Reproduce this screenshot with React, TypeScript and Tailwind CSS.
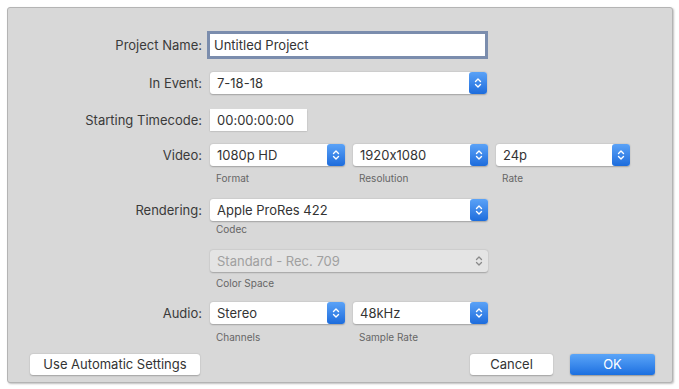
import React from "react";

const font = { fontFamily: "Inter, 'Liberation Sans', sans-serif", fontFeatureSettings: "'calt' 0" };

function Stepper({ disabled = false }: { disabled?: boolean }) {
  if (disabled) {
    return (
      <div className="flex h-full w-[18px] items-center justify-center">
        <svg width="8" height="12" viewBox="0 0 8 12" fill="none" stroke="#8a8a8a" strokeWidth="1.3" strokeLinecap="round" strokeLinejoin="round">
          <path d="M1.5 4.5 L4 2 L6.5 4.5" />
          <path d="M1.5 7.5 L4 10 L6.5 7.5" />
        </svg>
      </div>
    );
  }
  return (
    <div className="flex h-full w-[18px] items-center justify-center rounded-[3px] bg-gradient-to-b from-[#5aa2f7] to-[#1c6cdc]">
      <svg width="8" height="12" viewBox="0 0 8 12" fill="none" stroke="#ffffff" strokeWidth="1.4" strokeLinecap="round" strokeLinejoin="round">
        <path d="M1.5 4.5 L4 2 L6.5 4.5" />
        <path d="M1.5 7.5 L4 10 L6.5 7.5" />
      </svg>
    </div>
  );
}

function Select({ value, width, disabled = false }: { value: string; width: string; disabled?: boolean }) {
  return (
    <div
      className={`flex h-[22px] ${width} items-center justify-between rounded-[3px] ${
        disabled ? "bg-[#e4e4e4] text-[#a0a0a0]" : "bg-white text-[#333333]"
      } shadow-[0_0.5px_1.5px_rgba(0,0,0,0.25)]`}
    >
      <span className="pl-[7px] text-[13px] leading-none">{value}</span>
      <Stepper disabled={disabled} />
    </div>
  );
}

function Label({ children }: { children: React.ReactNode }) {
  return <div className="w-[195px] pr-[1px] text-right text-[13px] leading-none text-[#3a3a3a]">{children}</div>;
}

function Sub({ children, width }: { children: React.ReactNode; width: string }) {
  return <div className={`${width} pl-[6px] text-[10px] leading-[12px] text-[#666666]`}>{children}</div>;
}

export default function App() {
  return (
    <div className="h-[389px] w-[679px] bg-white p-[7px]" style={font}>
      <div className="flex h-[376px] w-[666px] flex-col rounded-[3px] border border-[#b4b4b4] bg-[#d8d8d8] shadow-[1px_1px_2px_rgba(0,0,0,0.25)]">
        {/* Project Name */}
        <div className="mt-[26px] flex items-center gap-[7px]">
          <Label>Project Name:</Label>
          <div className="flex h-[22px] w-[275px] items-center bg-white outline outline-[3px] outline-[#7b8dad]">
            <span className="pl-[4px] text-[13px] leading-none text-[#333333]">Untitled Project</span>
          </div>
        </div>
        {/* In Event */}
        <div className="mt-[16px] flex items-center gap-[7px]">
          <Label>In Event:</Label>
          <Select value="7-18-18" width="w-[277px]" />
        </div>
        {/* Timecode */}
        <div className="mt-[15px] flex items-center gap-[7px]">
          <Label>Starting Timecode:</Label>
          <div className="flex h-[22px] w-[97px] items-center bg-white shadow-[0_0.5px_1.5px_rgba(0,0,0,0.25)]">
            <span className="pl-[7px] text-[13px] leading-none text-[#333333]">00:00:00:00</span>
          </div>
        </div>
        {/* Video */}
        <div className="mt-[13px] flex items-center gap-[7px]">
          <Label>Video:</Label>
          <div className="flex gap-[8px]">
            <Select value="1080p HD" width="w-[135px]" />
            <Select value="1920x1080" width="w-[135px]" />
            <Select value="24p" width="w-[134px]" />
          </div>
        </div>
        <div className="mt-[6px] flex gap-[7px]">
          <div className="w-[195px]" />
          <div className="flex gap-[8px]">
            <Sub width="w-[135px]">Format</Sub>
            <Sub width="w-[135px]">Resolution</Sub>
            <Sub width="w-[134px]">Rate</Sub>
          </div>
        </div>
        {/* Rendering */}
        <div className="mt-[15px] flex items-center gap-[7px]">
          <Label>Rendering:</Label>
          <Select value="Apple ProRes 422" width="w-[278px]" />
        </div>
        <div className="mt-[2px] flex gap-[7px]">
          <div className="w-[195px]" />
          <Sub width="w-[135px]">Codec</Sub>
        </div>
        {/* Color space */}
        <div className="mt-[15px] flex items-center gap-[7px]">
          <div className="w-[195px]" />
          <Select value="Standard - Rec. 709" width="w-[278px]" disabled />
        </div>
        <div className="mt-[5px] flex gap-[7px]">
          <div className="w-[195px]" />
          <Sub width="w-[135px]">Color Space</Sub>
        </div>
        {/* Audio */}
        <div className="mt-[13px] flex items-center gap-[7px]">
          <Label>Audio:</Label>
          <div className="flex gap-[8px]">
            <Select value="Stereo" width="w-[135px]" />
            <Select value="48kHz" width="w-[135px]" />
          </div>
        </div>
        <div className="mt-[7px] flex gap-[7px]">
          <div className="w-[195px]" />
          <div className="flex gap-[8px]">
            <Sub width="w-[135px]">Channels</Sub>
            <Sub width="w-[135px]">Sample Rate</Sub>
          </div>
        </div>
        {/* Buttons */}
        <div className="mt-[11px] flex items-center pl-[22px] pr-[17px]">
          <div className="flex h-[21px] w-[170px] items-center justify-center rounded-[3px] bg-white text-[13px] leading-none text-[#333333] shadow-[0_0.5px_1.5px_rgba(0,0,0,0.25)]">
            Use Automatic Settings
          </div>
          <div className="flex-1" />
          <div className="flex h-[21px] w-[83px] items-center justify-center rounded-[3px] bg-white text-[13px] leading-none text-[#333333] shadow-[0_0.5px_1.5px_rgba(0,0,0,0.25)]">
            Cancel
          </div>
          <div className="ml-[17px] flex h-[21px] w-[85px] items-center justify-center rounded-[3px] bg-gradient-to-b from-[#5aa5f8] to-[#1b6fe0] text-[13px] leading-none text-white shadow-[0_0.5px_1.5px_rgba(0,0,0,0.3)]">
            OK
          </div>
        </div>
      </div>
    </div>
  );
}
